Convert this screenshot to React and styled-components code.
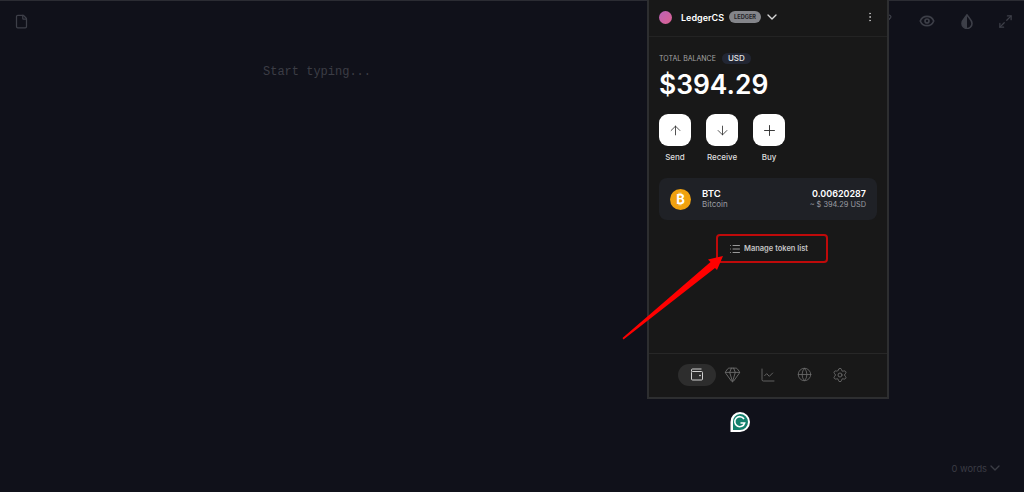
import React from 'react';
import styled, { createGlobalStyle } from 'styled-components';
import {
  ArrowUp,
  ArrowDown,
  Plus,
  ChevronDown,
  EllipsisVertical,
  List,
  Gem,
  ChartLine,
  Globe,
  Settings,
  Eye,
  Maximize2,
  File,
  Pencil,
} from 'lucide-react';

const GlobalStyle = createGlobalStyle`
  html, body {
    margin: 0;
    height: 100%;
    background: #10111a;
    overflow: hidden;
  }
  #root {
    height: 100%;
  }
`;

const Page = styled.div`
  position: relative;
  height: 492px;
  box-sizing: border-box;
  border-top: 1px solid #2b2c33;
  background: #10111a;
  display: flex;
  flex-direction: column;
  font-family: 'Inter', 'Liberation Sans', sans-serif;
`;

const Toolbar = styled.div`
  display: flex;
  justify-content: space-between;
  align-items: center;
  padding: 12px 11px 0 14px;
  color: #3d3f48;
`;

const ToolGroup = styled.div`
  display: flex;
  align-items: center;
  gap: 24.5px;
`;

const HiddenPencil = styled(Pencil)`
  margin-right: 3px;
`;

const Editor = styled.div`
  flex: 1;
  padding: 35px 0 0 263px;
  font-family: 'Liberation Mono', monospace;
  font-size: 12px;
  line-height: 16px;
  color: #3c3d45;
`;

const Footer = styled.div`
  display: flex;
  justify-content: flex-end;
  align-items: center;
  padding: 0 21px 16px 0;
  font-size: 9.3px;
  color: #3b3c45;
`;

const Wallet = styled.div`
  position: absolute;
  top: -1px;
  left: 647px;
  width: 242px;
  height: 399px;
  box-sizing: border-box;
  border: 2px solid #2d2e30;
  border-top: 0;
  background: #181818;
  display: flex;
  flex-direction: column;
  color: #fff;
`;

const WalletHeader = styled.div`
  height: 37px;
  box-sizing: border-box;
  flex: none;
  border-bottom: 1px solid #232323;
  display: flex;
  align-items: center;
  padding: 0 11px 2px 10px;
`;

const Avatar = styled.span`
  width: 13px;
  height: 13px;
  border-radius: 50%;
  background: linear-gradient(135deg, #bb62b8, #dc6290);
  margin-right: 9px;
`;

const AccountName = styled.span`
  font-size: 9px;
  font-weight: 600;
  margin-right: 5px;
`;

const Tag = styled.span`
  font-size: 5.6px;
  font-weight: 700;
  line-height: 12px;
  width: 32px;
  text-align: center;
  border-radius: 6px;
  background: #84858a;
  color: #26262a;
  margin-right: 3px;
`;

const HeaderSpacer = styled.span`
  flex: 1;
`;

const Balance = styled.div`
  padding: 15px 10px 0;
`;

const BalanceLabel = styled.div`
  display: flex;
  align-items: center;
  gap: 6px;
  font-size: 7px;
  color: #a5a5a5;
  height: 12px;
`;

const CurrencyPill = styled.span`
  font-size: 8px;
  font-weight: 500;
  line-height: 11px;
  padding: 0 6px;
  border-radius: 6px;
  background: #222633;
  color: #e6e6e6;
`;

const Amount = styled.div`
  font-size: 26.4px;
  font-weight: 600;
  line-height: 34px;
  margin-top: 3px;
`;

const Actions = styled.div`
  display: flex;
  padding: 13px 0 0 10px;
  gap: 15px;
`;

const Action = styled.div`
  width: 32px;
  display: flex;
  flex-direction: column;
  align-items: center;
  font-size: 8px;
  font-weight: 500;
  color: #dedede;
`;

const ActionIcon = styled.span`
  width: 32px;
  height: 32px;
  border-radius: 9px;
  background: #fff;
  color: #2a2a2a;
  display: flex;
  align-items: center;
  justify-content: center;
  margin-bottom: 6px;
`;

const TokenCard = styled.div`
  margin: 16px 10px 0;
  height: 42px;
  border-radius: 8px;
  background: #1f2126;
  display: flex;
  align-items: center;
  padding: 0 11px;
`;

const CoinIcon = styled.span`
  width: 21px;
  height: 21px;
  border-radius: 50%;
  background: #f0a10f;
  color: #fff;
  font-size: 13px;
  font-weight: 700;
  display: flex;
  align-items: center;
  justify-content: center;
  margin-right: 11px;
`;

const TokenText = styled.div`
  display: flex;
  flex-direction: column;
  align-items: ${(p) => (p.$end ? 'flex-end' : 'flex-start')};
  margin-left: ${(p) => (p.$end ? 'auto' : '0')};
`;

const TokenMain = styled.span`
  font-size: ${(p) => (p.$end ? '9px' : '9.5px')};
  font-weight: 600;
  line-height: 11px;
`;

const TokenSub = styled.span`
  font-size: ${(p) => (p.$end ? '7.4px' : '8px')};
  line-height: 11px;
  color: #9b9da3;
`;

const ManageRow = styled.div`
  display: flex;
  margin-top: 14px;
  padding-left: 67px;
`;

const ManageButton = styled.div`
  width: 112px;
  height: 29px;
  box-sizing: border-box;
  border: 2px solid #bf0a0a;
  border-radius: 4px;
  display: flex;
  align-items: center;
  padding-left: 11px;
  gap: 3px;
  font-size: 7.5px;
  font-weight: 600;
  color: #c5c5c5;
`;

const BottomNav = styled.div`
  margin-top: auto;
  height: 44px;
  box-sizing: border-box;
  flex: none;
  border-top: 1px solid #272727;
  display: flex;
  align-items: center;
  justify-content: center;
  padding: 0 0 2px 0;
  color: #6d6d6d;
`;

const NavItem = styled.span`
  display: flex;
  align-items: center;
  justify-content: center;
  width: ${(p) => (p.$active ? '38px' : '36px')};
  margin-right: ${(p) => (p.$active ? '-1.5px' : '0')};
  height: 22px;
  border-radius: 11px;
  background: ${(p) => (p.$active ? '#2d2d2d' : 'transparent')};
  color: ${(p) => (p.$active ? '#d0d0d0' : 'inherit')};
`;

const Arrow = styled.svg`
  position: absolute;
  left: 620px;
  top: 250px;
`;

const Badge = styled.svg`
  position: absolute;
  left: 729px;
  top: 410px;
`;

const WalletIcon = () => (
  <svg width="14" height="13" viewBox="0 0 14 13" fill="none" stroke="currentColor" strokeWidth="1">
    <path d="M1.5 3.5V2A1 1 0 0 1 2.5 1H11.5" />
    <rect x="1.5" y="3.5" width="11" height="8.5" rx="1" />
    <circle cx="10" cy="7.5" r="0.5" fill="currentColor" />
  </svg>
);

const ContrastIcon = () => (
  <svg width="14" height="15" viewBox="0 0 14 15">
    <path
      d="M7 1C5 4 2 6 2 9.5a5 5 0 0 0 10 0C12 6 9 4 7 1z"
      fill="none"
      stroke="currentColor"
      strokeWidth="1.6"
    />
    <path d="M7 1C5 4 2 6 2 9.5a5 5 0 0 0 5 5z" fill="currentColor" />
  </svg>
);

export default function App() {
  return (
    <Page>
      <GlobalStyle />
      <Toolbar>
        <File size={15} />
        <ToolGroup>
          <HiddenPencil size={14} />
          <Eye size={16} strokeWidth={2.5} />
          <ContrastIcon />
          <Maximize2 size={15} />
        </ToolGroup>
      </Toolbar>
      <Editor>Start typing...</Editor>
      <Footer>
        0 words
        <ChevronDown size={16} />
      </Footer>

      <Wallet>
        <WalletHeader>
          <Avatar />
          <AccountName>LedgerCS</AccountName>
          <Tag>LEDGER</Tag>
          <ChevronDown size={16} color="#d8d8d8" />
          <HeaderSpacer />
          <EllipsisVertical size={12} color="#b5b5b5" />
        </WalletHeader>
        <Balance>
          <BalanceLabel>
            TOTAL BALANCE
            <CurrencyPill>USD</CurrencyPill>
          </BalanceLabel>
          <Amount>$394.29</Amount>
        </Balance>
        <Actions>
          <Action>
            <ActionIcon>
              <ArrowUp size={15} strokeWidth={1.3} />
            </ActionIcon>
            Send
          </Action>
          <Action>
            <ActionIcon>
              <ArrowDown size={15} strokeWidth={1.3} />
            </ActionIcon>
            Receive
          </Action>
          <Action>
            <ActionIcon>
              <Plus size={17} strokeWidth={1.3} />
            </ActionIcon>
            Buy
          </Action>
        </Actions>
        <TokenCard>
          <CoinIcon>₿</CoinIcon>
          <TokenText>
            <TokenMain>BTC</TokenMain>
            <TokenSub>Bitcoin</TokenSub>
          </TokenText>
          <TokenText $end>
            <TokenMain $end>0.00620287</TokenMain>
            <TokenSub $end>~ $ 394.29 USD</TokenSub>
          </TokenText>
        </TokenCard>
        <ManageRow>
          <ManageButton>
            <List size={12} color="#999" />
            Manage token list
          </ManageButton>
        </ManageRow>
        <BottomNav>
          <NavItem $active>
            <WalletIcon />
          </NavItem>
          <NavItem>
            <Gem size={17} strokeWidth={1.3} />
          </NavItem>
          <NavItem>
            <ChartLine size={16} strokeWidth={1.3} />
          </NavItem>
          <NavItem>
            <Globe size={15} strokeWidth={1.3} />
          </NavItem>
          <NavItem>
            <Settings size={16} strokeWidth={1.3} />
          </NavItem>
        </BottomNav>
      </Wallet>

      <Arrow width="110" height="95" viewBox="0 0 110 95">
        <path d="M2.5 87 L3.5 88.5 L95 17 L97 19 L103 5 L88 8.5 L90.5 11 Z" fill="#f00" />
      </Arrow>

      <Badge width="22" height="22" viewBox="0 0 22 22">
        <path d="M11 1a10 10 0 0 1 0 20H1.5V11A9.5 9.5 0 0 1 11 1z" fill="#fff" />
        <path d="M11 3a8 8 0 0 1 0 16H4l0-8A7.5 7.5 0 0 1 11 3z" fill="#14806d" />
        <path
          d="M15 8a5 5 0 1 0 0.6 4H11.5"
          fill="none"
          stroke="#fff"
          strokeWidth="1.6"
        />
      </Badge>
    </Page>
  );
}
